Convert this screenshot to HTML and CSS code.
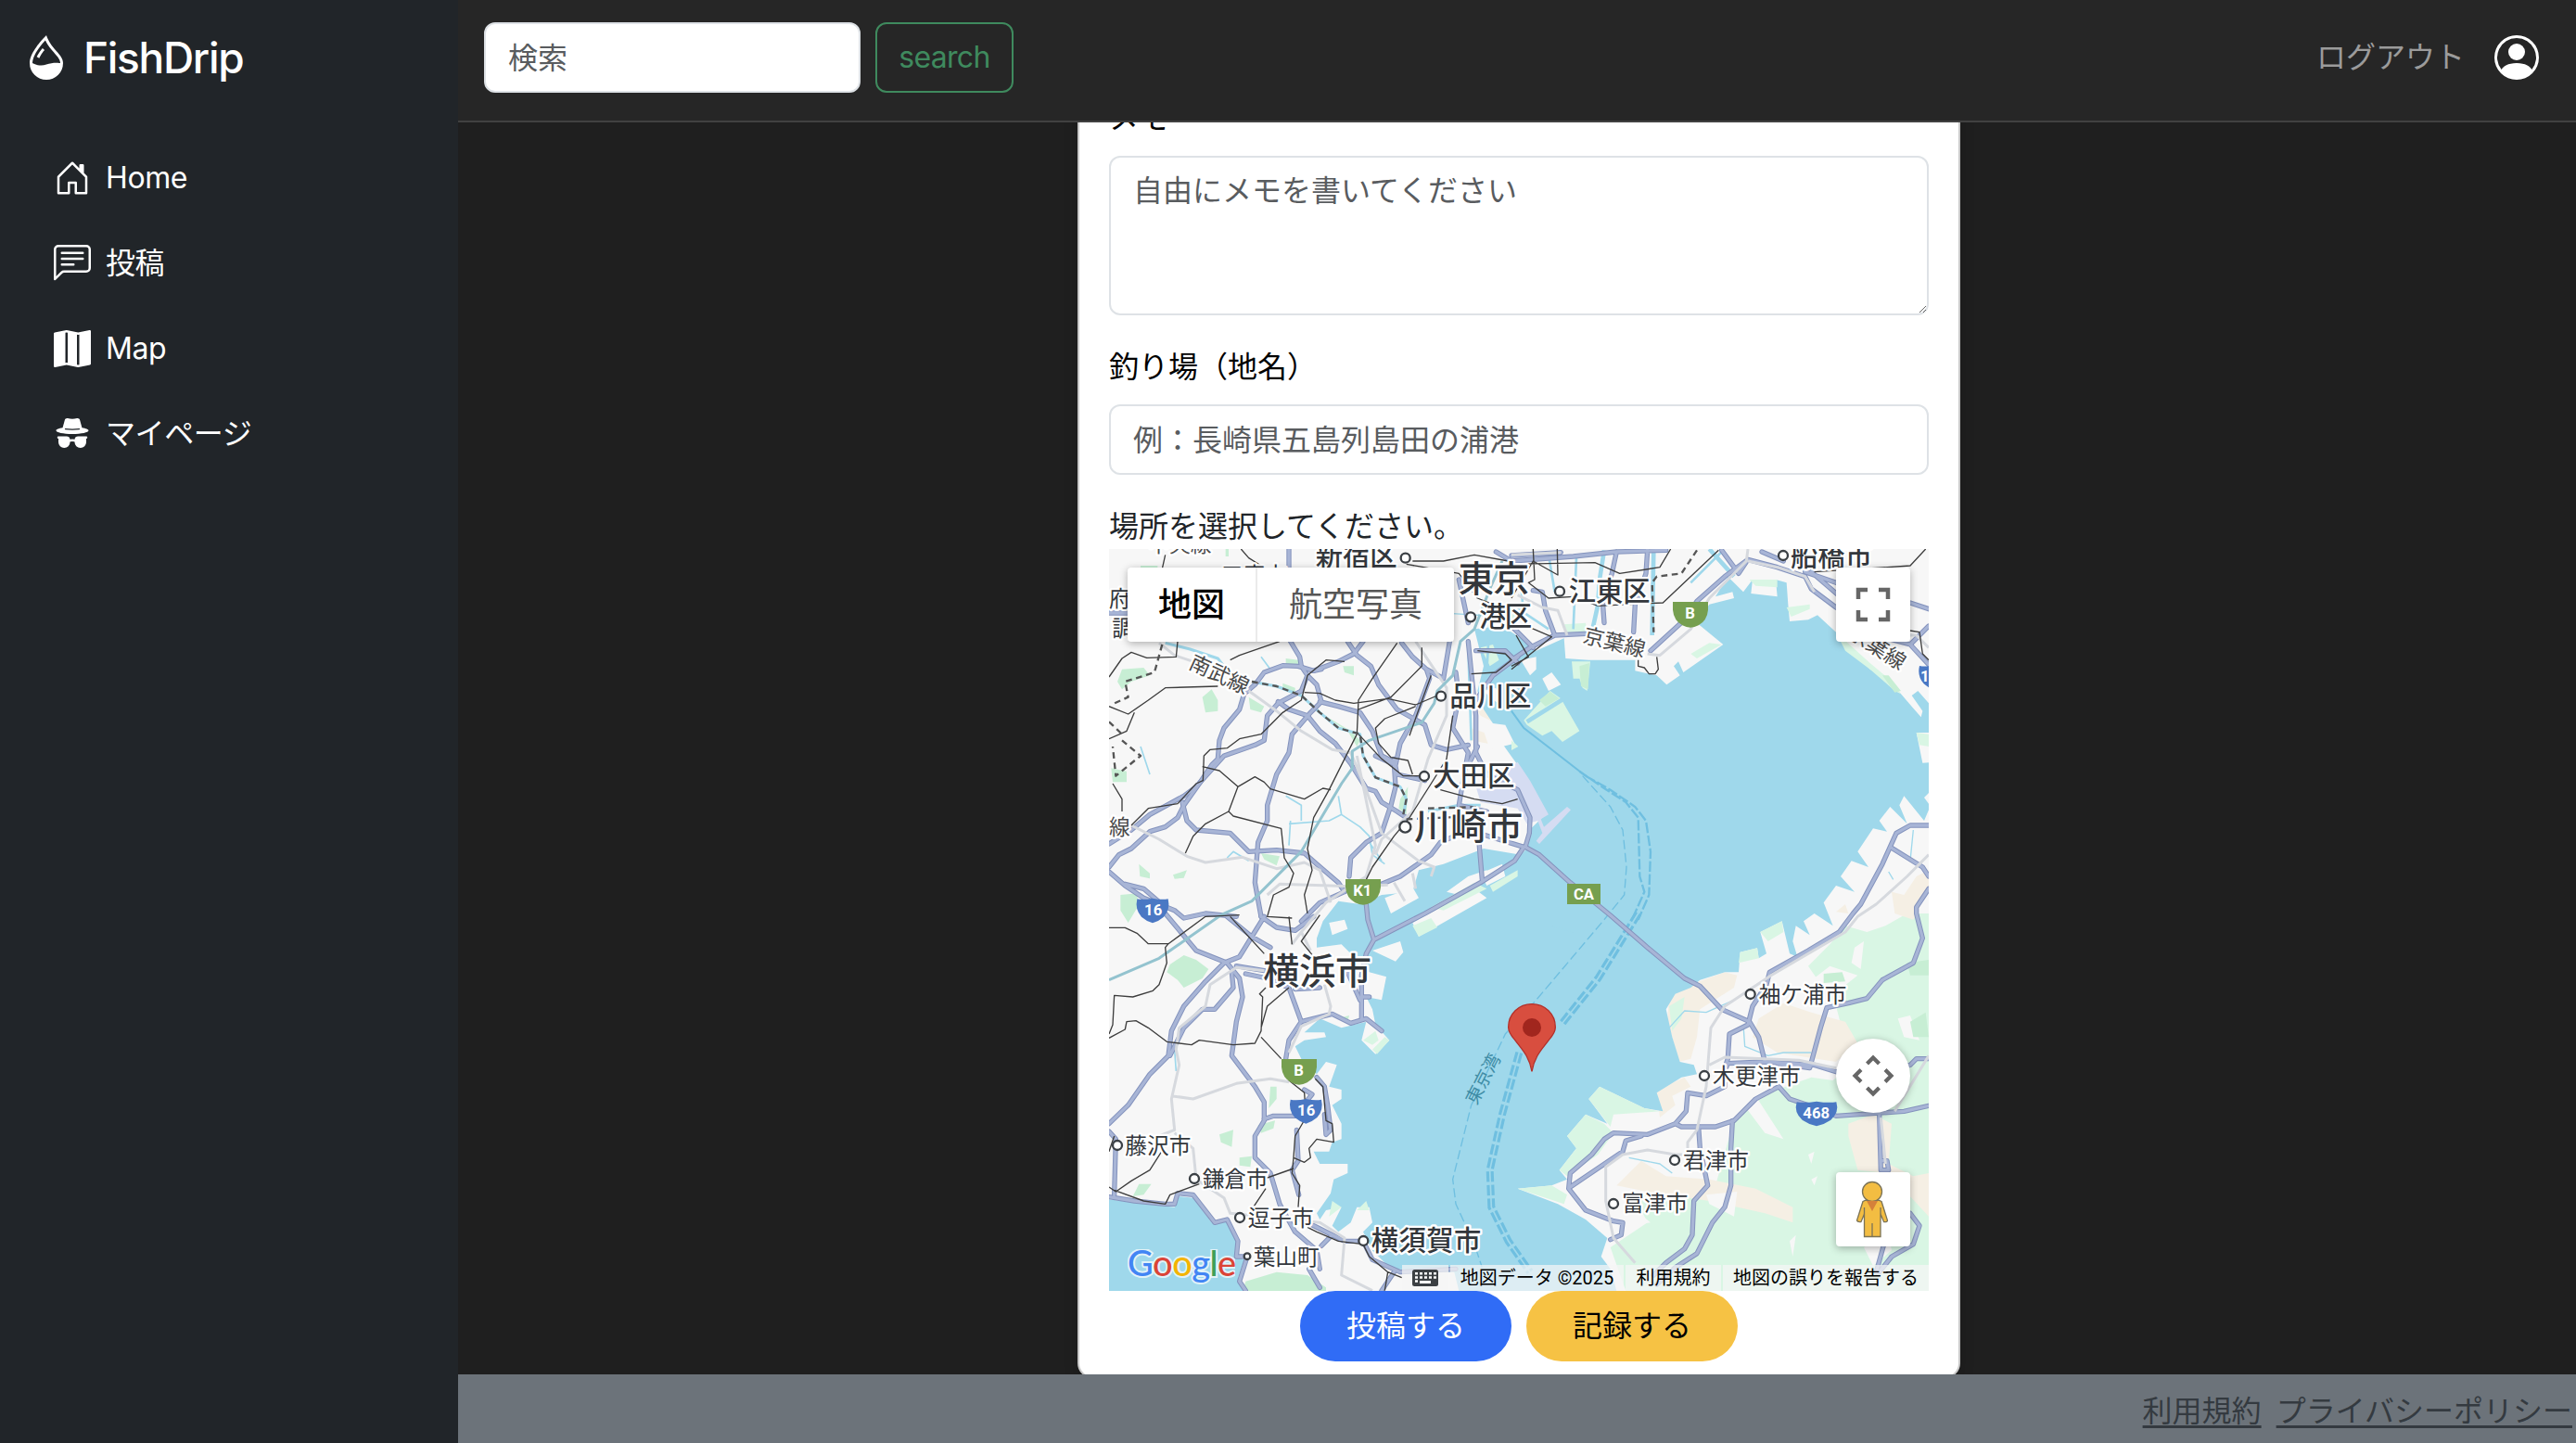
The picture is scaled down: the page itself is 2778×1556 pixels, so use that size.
FILE: index.html
```html
<!DOCTYPE html>
<html lang="ja">
<head>
<meta charset="utf-8">
<title>FishDrip</title>
<link rel="stylesheet" href="styles.css">
</head>
<body>
<div class="app">
  <aside class="sidebar">
    <a class="brand">
      <svg class="icon-lg" viewBox="0 0 16 16" fill="currentColor"><path fill-rule="evenodd" d="M7.21.8C7.69.295 8 0 8 0q.164.544.371 1.038c.812 1.946 2.073 3.35 3.197 4.6C12.878 7.096 14 8.345 14 10a6 6 0 0 1-12 0C2 6.668 5.58 2.517 7.21.8m.413 1.021A31 31 0 0 0 5.794 3.99c-.726.95-1.436 2.008-1.96 3.07C3.304 8.133 3 9.138 3 10c0 0 2.5 1.5 5 .5s5-.5 5-.5c0-1.201-.796-2.157-2.181-3.7l-.03-.032C9.75 5.11 8.5 3.72 7.623 1.82z"/><path fill-rule="evenodd" d="M4.553 7.776c.82-1.641 1.717-2.753 2.093-3.13l.708.708c-.29.29-1.128 1.311-1.907 2.87z"/></svg>
      <span>FishDrip</span>
    </a>
    <nav class="nav">
      <a class="nav-item"><svg class="icon" viewBox="0 0 16 16" fill="currentColor"><path d="M8.354 1.146a.5.5 0 0 0-.708 0l-6 6A.5.5 0 0 0 1.5 7.5v7a.5.5 0 0 0 .5.5h4.5a.5.5 0 0 0 .5-.5v-4h2v4a.5.5 0 0 0 .5.5H14a.5.5 0 0 0 .5-.5v-7a.5.5 0 0 0-.146-.354L13 5.793V2.5a.5.5 0 0 0-.5-.5h-1a.5.5 0 0 0-.5.5v1.293zM2.5 14V7.707l5.5-5.5 5.5 5.5V14H10v-4a.5.5 0 0 0-.5-.5h-3a.5.5 0 0 0-.5.5v4z"/></svg><span>Home</span></a>
      <a class="nav-item"><svg class="icon" viewBox="0 0 16 16" fill="currentColor"><path d="M14 1a1 1 0 0 1 1 1v8a1 1 0 0 1-1 1H4.414A2 2 0 0 0 3 11.586l-2 2V2a1 1 0 0 1 1-1zM2 0a2 2 0 0 0-2 2v12.793a.5.5 0 0 0 .854.353l2.853-2.853A1 1 0 0 1 4.414 12H14a2 2 0 0 0 2-2V2a2 2 0 0 0-2-2z"/><path d="M3 3.5a.5.5 0 0 1 .5-.5h9a.5.5 0 0 1 0 1h-9a.5.5 0 0 1-.5-.5M3 6a.5.5 0 0 1 .5-.5h9a.5.5 0 0 1 0 1h-9A.5.5 0 0 1 3 6m0 2.5a.5.5 0 0 1 .5-.5h5a.5.5 0 0 1 0 1h-5a.5.5 0 0 1-.5-.5"/></svg><span>投稿</span></a>
      <a class="nav-item"><svg class="icon" viewBox="0 0 16 16" fill="currentColor"><path fill-rule="evenodd" d="M16 .5a.5.5 0 0 0-.598-.49L10.5.99 5.598.01a.5.5 0 0 0-.196 0l-5 1A.5.5 0 0 0 0 1.5v14a.5.5 0 0 0 .598.49l4.902-.98 4.902.98a.5.5 0 0 0 .196 0l5-1A.5.5 0 0 0 16 14.5zM5 14.09V1.11l.5-.1.5.1v12.98l-.402-.08a.5.5 0 0 0-.196 0zm5 .8V1.91l.402.08a.5.5 0 0 0 .196 0L11 1.91v12.98l-.5.1z"/></svg><span>Map</span></a>
      <a class="nav-item"><svg class="icon" viewBox="0 0 16 16" fill="currentColor"><path fill-rule="evenodd" d="m4.736 1.968-.892 3.269-.014.058C2.113 5.568 1 6.006 1 6.5 1 7.328 4.134 8 8 8s7-.672 7-1.5c0-.494-1.113-.932-2.83-1.205l-.014-.058-.892-3.27c-.146-.533-.698-.849-1.239-.734C9.411 1.363 8.62 1.5 8 1.5s-1.411-.136-2.025-.267c-.541-.115-1.093.2-1.239.735m.015 3.867a.25.25 0 0 1 .274-.224c.9.092 1.91.143 2.975.143a30 30 0 0 0 2.975-.143.25.25 0 0 1 .05.498c-.918.093-1.944.145-3.025.145s-2.107-.052-3.025-.145a.25.25 0 0 1-.224-.274M2 10.5q.001-.264.085-.5H2a.5.5 0 0 1 0-1h3.5a1.5 1.5 0 0 1 1.488 1.312 3.5 3.5 0 0 1 2.024 0A1.5 1.5 0 0 1 10.5 9H14a.5.5 0 0 1 0 1h-.085q.084.236.085.5v1a2.5 2.5 0 0 1-5 0v-.14l-.21-.07a2.5 2.5 0 0 0-1.58 0l-.21.07v.14a2.5 2.5 0 0 1-5 0z"/></svg><span>マイページ</span></a>
    </nav>
  </aside>

  <div class="page">
    <header class="topbar">
      <form class="search">
        <input class="field search-field" type="text" placeholder="検索">
        <button class="search-btn" type="button">search</button>
      </form>
      <div class="account">
        <a class="logout">ログアウト</a>
        <svg class="icon-lg" viewBox="0 0 16 16" fill="currentColor"><path d="M11 6a3 3 0 1 1-6 0 3 3 0 0 1 6 0"/><path fill-rule="evenodd" d="M0 8a8 8 0 1 1 16 0A8 8 0 0 1 0 8m8-7a7 7 0 0 0-5.468 11.37C3.242 11.226 4.805 10 8 10s4.757 1.225 5.468 2.37A7 7 0 0 0 8 1"/></svg>
      </div>
    </header>

    <main class="content">
      <form class="card">
        <label class="label">メモ</label>
        <textarea class="field memo" placeholder="自由にメモを書いてください"></textarea>
        <label class="label">釣り場（地名）</label>
        <input class="field place" type="text" placeholder="例：長崎県五島列島田の浦港">
        <div class="map-title">場所を選択してください。</div>

        <div class="map">
          <svg class="map-canvas" viewBox="18 21 2652 2400">
            <defs>
              <path id="shield" d="M-50-34Q-30-30 0-36Q30-30 50-34Q58 0 36 24Q20 38 0 44Q-20 38-36 24Q-58 0-50-34z"/>
              <path id="expwy" d="M-57-42H57V-16Q54 18 26 34Q0 48-26 34Q-54 18-57-16z"/>
              <g id="road-lines">
                <path d="M18 1050L50 1010 90 990 150 935 200 920 240 890 260 850 310 780 350 720 370 700 375 640 390 600 440 540 455 490 490 460 520 420 580 398 630 400 680 415 760 385 810 360 840 320"/>
                <path d="M18 975L90 930 150 880 260 820 300 790 390 690 490 655 520 640 530 560 565 520 640 480 660 430 640 400 635 370 605 320M600 90V21M18 228H80"/>
                <path d="M510 1210L490 1100 500 970 530 900 530 850 560 750 600 680 610 620 670 550 705 515 690 460 660 430"/>
                <path d="M565 515L600 540 660 560 700 610 750 650 800 715 850 795 880 805 900 840 950 870 980 890"/>
                <path d="M700 515L760 530 830 550 870 610 900 690 940 710 945 790 930 850 900 940 850 970 800 1020 795 1080"/>
                <path d="M790 320L820 365 865 400 890 460 950 540 1040 590 1060 655 1110 670 1180 655"/>
                <path d="M965 325L1000 370 1045 410 1055 440 1010 560 960 650 945 720 880 690M940 700L950 750 1040 770M680 415L705 410M1045 410L1100 440 1120 320"/>
                <path d="M255 840L270 900 300 930 410 940 470 1000 560 995 650 1005 690 1040 760 1100 780 1130 700 1165 640 1225"/>
                <path d="M18 1065L70 1110 130 1150 230 1190 260 1215 330 1200 430 1210M70 1105L130 1120 200 1180"/>
                <path d="M900 1105L960 1080 1060 1010 1090 970 1180 930 1360 985M1215 970L1225 1090"/>
                <path d="M850 1170L855 1220 875 1285 850 1330 835 1400V1540M875 1285L1040 1200 1220 1100 1330 1030 1360 985"/>
                <path d="M1180 320L1190 420 1205 560 1205 680 1240 750 1340 800 1380 890 1378 940 1365 985M1140 420L1150 500 1130 600 1180 680 1165 760 1150 850 1240 870M1340 370L1260 430 1205 510M1205 350L1300 350 1340 390M1180 720L1210 660M1150 120L1180 260M1270 30L1320 60"/>
                <path d="M1365 985L1410 1010 1510 1100 1640 1206 1760 1310 1880 1410 1930 1435 2000 1510 2090 1550 2120 1600 2140 1680 2020 1685 2014 1700"/>
                <path d="M1320 60L1520 45 1660 30 1820 25M1320 42L1480 32M1660 30L1645 100 1615 190 1620 260M1760 25L1755 100 1720 200 1715 290"/>
                <path d="M1320 380L1380 340 1460 300 1560 295M1390 155L1420 160 1430 220 1460 300M1320 270L1390 340"/>
                <path d="M1770 350L1880 250 1920 190 2010 110 2085 55 2180 80 2270 110 2290 150 2370 210 2420 240 2500 300 2610 330 2670 395M2000 25L2055 100 2085 55M2270 95L2370 130 2610 195 2670 215M2610 330L2670 270M2130 30L2200 60M2290 95L2400 190"/>
                <path d="M2670 915L2610 915 2565 940 2520 1040 2450 1170 2425 1200 2380 1260 2280 1320 2155 1390 2145 1430 2100 1500 2085 1560 2025 1590 2020 1670 2010 1700M2545 985L2650 1050 2670 1080M2670 1120L2630 1180 2630 1200 2650 1280 2620 1360 2520 1415 2470 1475 2410 1490 2340 1505 2320 1570 2285 1700 2180 1685M2140 1680L2300 1690 2380 1715 2520 1720 2610 1690 2630 1670 2670 1670"/>
                <path d="M2010 1700V1760L1950 1790 1890 1780 1885 1840 1850 1880 1760 1915 1650 1910 1620 1930 1580 1980 1510 2040 1505 2090 1560 2160 1650 2195 1680 2200 1675 2240 1640 2255M1850 1880L1870 1890 1980 1890 2040 1870 2110 1800 2185 1760 2220 1800 2280 1820 2370 1855 2590 1840 2670 1822"/>
                <path d="M1925 1890L1930 1960 1955 2080 1910 2130 1905 2240 1880 2285 1820 2330 1780 2370M2035 1870L2030 1960V2080L2010 2150 1970 2200 1920 2300 1850 2345 1790 2400M1510 2085L1680 1970 1690 1935 1740 1920M2510 1850L2515 2030 2540 2030 2535 2000 2515 2000M2610 2170L2640 2210 2620 2270 2550 2310 2510 2360M2525 2270L2500 2360"/>
                <path d="M200 1200L300 1320 400 1360 440 1410 450 1470 430 1550 415 1660 490 1760 520 1810 520 1870 490 1920 490 1990 540 2040 570 2140 620 2230 690 2290 700 2350M665 2350L700 2410"/>
                <path d="M520 1210L480 1275 440 1340 390 1360 330 1420 260 1500 220 1580 210 1660 150 1720 80 1820 18 1880M400 1210L480 1275 540 1310M510 1210L560 1245 620 1255 680 1210M415 1390L420 1440 360 1510 320 1510 260 1570 215 1660"/>
                <path d="M460 1395L530 1410 600 1440 640 1550 600 1610 590 1670M430 1370L520 1385M640 1550L740 1525 800 1555 850 1540 900 1580M835 1470H860M790 1390L830 1480M620 1445L700 1440"/>
                <path d="M520 1865L550 1855H650M625 1900L630 2000 610 2030 632 2110M690 1730L715 1760 725 1820 735 1900 720 1915 715 1850M650 1770L675 1785 655 1810"/>
                <path d="M18 2117L100 2130 200 2140 230 2140 240 2105 290 2110 360 2200 400 2190 435 2260 430 2310 465 2310 440 2390 460 2420M18 1905L40 1930 35 2110M670 2205L780 2260 840 2260 870 2320 960 2360 1140 2350M780 2260L740 2240 705 2275M940 2360L900 2420"/>
              </g>
            </defs>

            <rect x="18" y="21" width="2652" height="2400" fill="#f7f7f7"/>

            <!-- parks and hills -->
            <g fill="#c7eed4">
              <path d="M60 410L130 405 150 430 90 450 60 475 45 450zM320 500L350 475 370 510 370 545 330 550zM470 500L520 530 510 550 475 540zM590 375L630 380 640 400 590 395zM775 400L810 400 810 430 780 420zM580 455L620 470 620 485 580 475zM25 730L75 740 75 775 30 775zM510 1005L570 1015 560 1045 520 1025zM115 1040L150 1070 150 1087 118 1080zM225 1075L270 1060 260 1085 230 1088zM55 1140L110 1135 110 1180 80 1230 55 1190zM395 21H405V45H395zM120 75H175V85H120z"/>
              <path d="M215 1365L260 1335 300 1350 340 1380 320 1410 260 1440 240 1415 205 1390zM540 1760H560V1800L535 1830zM500 1885L555 1870 550 1895 510 1910zM375 1915L420 1900 415 1955 380 1940zM440 1990L480 1985 475 2020 440 2015zM115 2075L155 2075 130 2110 95 2115zM775 1535L795 1530 790 1550zM700 550L800 610 830 640 820 660 790 610 710 560zM960 830L985 790 980 880 955 860z"/>
            </g>

            <!-- Chiba side vegetation -->
            <path fill="#d9f6e4" d="M2350 1300L2400 1240 2470 1260 2530 1240 2600 1200H2670V1850L2670 2421H1690L1640 2280 1760 2200 1720 2120 1860 2080 1980 2080 2040 1870 2090 1820 2180 1770 2290 1730 2360 1740 2420 1690 2370 1500 2280 1370z"/>
            <g fill="#f5efe4">
              <path d="M1830 1470L1900 1430 2010 1390 2050 1400 2040 1440 1930 1510 1920 1600 1900 1670 1860 1680 1840 1600 1825 1540zM2120 1540L2200 1490 2290 1520 2400 1550 2440 1620 2370 1680 2180 1650 2100 1600zM1790 1770L1880 1730 1900 1760 1840 1790 1850 1820 1800 1860zM1660 2080L1740 2000 1820 2050 1960 2060 2110 2090 2230 2150 2230 2200 2140 2170 1960 2130 1760 2100zM2410 1880L2490 1850 2550 1880 2540 2010 2620 2050 2670 2040V2180L2540 2040 2440 2030 2410 1920zM2550 1130L2590 1140 2630 1080 2670 1060V1120L2620 1220 2560 1200zM2370 1195L2400 1170 2410 1200zM1200 530L1260 550 1260 580 1220 560zM1190 600L1190 640 1290 660 1300 640z"/>
            </g>
            <g fill="#f7f7f7">
              <path d="M2050 1790L2110 1790 2200 1930 2140 1910zM2260 1440L2350 1370 2440 1400 2340 1480zM2570 1540L2610 1530 2640 1610 2590 1600zM2430 1310L2460 1290 2450 1380 2420 1360zM2280 1980L2300 1970 2290 2010zM2290 2060L2310 2050 2300 2080zM2220 2260L2240 2240 2230 2310zM1710 2150L1770 2200 1700 2210zM1950 2110L2050 2100 2040 2180 1960 2140zM2460 2280L2540 2240 2550 2290 2490 2340z"/>
            </g>
            <path fill="#c7eed4" d="M2330 1395L2390 1390 2400 1420 2330 1425zM2600 1360L2670 1350V1400L2610 1400zM2610 1550L2660 1520 2670 1600 2620 1600zM460 2390L560 2360 660 2370 720 2410V2421H450z"/>

            <!-- Tokyo Bay -->
            <path fill="#9fd8eb" d="M1200 280L1290 270 1350 310 1400 350 1490 310 1495 375 1570 380 1720 380 1720 415 1790 430 1822 460 1865 430 1845 400 1860 385 1876 420 2005 330 1920 260 1960 200 2040 180 2035 160 1980 175 2020 110 2070 160 2100 120 2095 165 2180 175 2175 120 2210 130 2215 200 2220 255 2280 250 2310 235 2370 290 2420 340 2480 410 2520 430 2580 490 2645 565 2650 545 2615 495 2635 480 2670 520V615L2630 615 2650 713 2670 712V810L2655 825 2670 845V865L2655 900 2590 820 2575 850 2600 910 2545 855 2510 900 2535 935 2490 925 2440 1000 2475 1050 2420 1030 2385 1080 2430 1130 2370 1110 2330 1165 2360 1240 2300 1200 2265 1225 2285 1270 2240 1240 2230 1290 2245 1340 2220 1330 2195 1225 2125 1260 2145 1330 2120 1345 2115 1312 2060 1325 2055 1390 2010 1390 1930 1415 1900 1440 1850 1460 1820 1510 1840 1600 1865 1680 1910 1690 1920 1720 1870 1730 1790 1780 1810 1840 1750 1830 1605 1760 1570 1800 1630 1880 1560 1850 1500 1920 1530 1960 1475 2030 1500 2060 1450 2080 1340 2090 1470 2140 1560 2190 1630 2250 1610 2310 1640 2350 1660 2421H1150L1135 2360 930 2350 870 2290 840 2230 870 2200 860 2150 820 2150 800 2200 760 2230 740 2210 770 2150 720 2160 700 2190 690 2170 735 2105 745 2060 790 2040V2010L700 2010 680 1970 730 1970 740 1940 770 1930V1880L740 1820 770 1800V1770L730 1760 755 1690 720 1680 690 1720 640 1670 620 1630 650 1610 720 1600 715 1585 650 1585 700 1540 770 1570 850 1550 835 1610 880 1655 925 1610 880 1560 870 1510 850 1470 900 1480 915 1405 860 1390 820 1350 770 1300 690 1310V1280L710 1225 760 1160 830 1170 900 1140 1000 1130 1020 1060 1100 1040 1230 990 1350 1010 1370 990 1378 930 1430 880 1340 720 1290 650 1270 600 1230 540 1210 480 1230 400z"/>
            <!-- Sagami Bay -->
            <path fill="#9fd8eb" d="M18 2125L100 2135 230 2150 245 2115 290 2120 350 2200 400 2195 430 2260 425 2310 455 2320 435 2380 455 2421H18z"/>

            <!-- reclaimed islands -->
            <g fill="#f7f7f7">
              <path d="M1000 1230L1200 1120 1240 1150 1020 1275zM910 1150L1000 1115 1020 1150 930 1200zM1110 1130L1180 1080 1240 1060 1250 1090 1150 1140zM1220 1070L1290 1040 1300 1080 1240 1110zM870 1320L960 1290 970 1325 945 1355zM730 1230L780 1220 790 1250 740 1270zM1420 440L1450 420 1480 460 1440 480zM1350 380L1400 370 1400 410 1380 430zM1230 480L1270 470 1290 530 1250 500zM1220 580L1300 590 1330 650 1250 670zM790 1500L840 1480 860 1510 800 1530z"/>
            </g>
            <g fill="#d9f6e4">
              <path d="M1360 575L1445 480 1480 505 1540 610 1485 645 1450 610 1420 625 1370 590zM1515 385H1575L1565 480 1550 470 1540 440 1520 440zM1060 1180L1200 1100 1240 1120 1100 1190zM1250 1110L1340 1060 1340 1080 1260 1130zM1000 1240L1060 1215 1080 1245 1020 1275zM1320 640L1342 660 1320 672zM1900 360L1960 325 2000 330 1920 375zM2090 120L2180 120 2180 145 2110 140zM2210 210L2285 200 2285 215 2225 240zM2370 290L2480 390 2540 440 2580 490 2560 480 2480 410 2400 350zM2630 615L2670 620V660L2640 655zM1490 265L1560 260 1565 290 1500 290zM840 1610L880 1580 890 1610 870 1625zM870 1640L910 1600 925 1610 885 1655zM740 2130L770 2150 730 2180zM850 2130L860 2160 820 2160zM1500 1920L1560 1850 1620 1880 1650 1910 1600 1980 1500 2050 1475 2030 1530 1960zM1605 1760L1570 1800 1640 1890 1650 1850 1800 1840 1750 1830zM1340 2090L1450 2080 1500 2110 1490 2140zM1830 1500L1880 1470 1870 1540 1840 1580zM2060 1325L2115 1312 2120 1345 2055 1360zM2125 1260L2195 1225 2200 1260 2150 1290z"/>
              <path d="M1270 210L1340 200 1350 250 1300 260zM1220 340L1260 330 1280 380 1250 400z"/>
            </g>
            <path stroke="#9fd8eb" stroke-width="14" fill="none" d="M1370 580L1490 505"/>
            <path fill="#c7eed4" d="M1410 510L1445 482 1475 505 1430 530zM1540 400L1572 390 1568 475 1545 465zM2520 430L2540 430 2580 480 2560 485z"/>
            <path fill="#d5dcf2" d="M1205 790L1340 710 1380 770 1440 880 1415 895 1425 920 1500 855 1512 865 1410 975 1400 965 1420 940 1405 900 1370 910 1340 860 1220 840z"/>

            <!-- rivers -->
            <g fill="none" stroke="#9fd8eb" stroke-linejoin="round">
              <path stroke-width="9" d="M200 325L280 345 370 375 390 400M480 450L560 465 640 495 700 550 760 600 830 620 840 690 880 760 960 790 980 830 970 880M1050 870L1150 850 1220 850"/>
              <path stroke-width="5" d="M600 910L730 900 770 880 830 920 860 950 870 1010 910 1040M770 880L760 820M400 1020L420 1000 470 1030M510 370L540 410M605 900L600 980M120 660L150 750M640 900L640 850 590 820M860 970L900 1030M230 1640L235 1710"/>
              <path stroke-width="14" d="M1620 25L1605 120 1600 200 1580 290M1780 21L1775 300M1960 21L2040 110"/>
              <path stroke-width="8" d="M1180 340L1190 640M1250 240L1240 420M1320 200L1440 280M1350 130L1360 240M1440 40L1460 160M1530 50L1520 280M1900 130L2000 30"/>
              <path stroke-width="4" d="M1830 1570L1880 1515 1950 1520 2040 1480M2070 1560L2075 1630 2150 1660 2200 1650 2290 1650M1700 1990L1800 2010 1840 2040M2620 930L2610 1030M2540 1065L2555 1090M1130 230L1290 240M1450 1240L1520 1260"/>
            </g>

            <!-- ferry lanes -->
            <g fill="none" stroke="#6fbfe0">
              <path stroke-width="6" d="M1320 545L1360 600 1450 670 1560 755"/>
              <path stroke-width="7" stroke-dasharray="34 8" d="M1540 740L1620 795 1690 840 1730 890 1735 1080 1750 1130 1710 1220M1560 755L1640 800 1720 855 1755 900 1770 1000 1765 1140 1730 1220"/>
              <path stroke-width="4" stroke-dasharray="30 12" d="M1550 755L1640 855 1680 930 1692 1050 1685 1140 1620 1220 1400 1480 1300 1590 1190 1820 1130 2060 1140 2140 1200 2270 1225 2345"/>
              <path stroke-width="24" stroke-dasharray="34 10" d="M1730 1200L1600 1410 1480 1560M1345 1650L1290 1850 1250 2030 1255 2150 1310 2260 1380 2360"/>
            </g>
            <path fill="none" stroke="#9fd8eb" stroke-width="5" d="M1730 1200L1600 1410 1480 1560M1345 1650L1290 1850 1250 2030 1255 2150 1310 2260 1380 2360"/>

            <!-- roads -->
            <use href="#road-lines" class="road-edge"/>
            <use href="#road-lines" class="road-fill"/>

            <!-- JR lines -->
            <g class="rail-light">
              <path d="M90 915L180 960 270 1015 330 1035 450 1018 560 1055 650 1035 700 1060 735 1165M180 325L230 365 290 385M470 480L560 545 640 610 740 670 800 680 850 800 900 940 1020 1030 1070 1050 1060 1080M820 690L880 980 850 1080 720 1165 640 1260 670 1320M1010 320L1110 470 1110 560 1050 700 1000 870 900 960 880 1010M530 1140L570 1105 800 1112 920 1108M640 1260L610 1300M940 1100L975 1160M1000 1070L1010 1120"/>
              <path d="M520 1385L430 1375 345 1430 330 1500 245 1570 235 1640 245 1690 220 1800 230 1900 180 1920M220 1790L290 1800 430 1750 540 1735 600 1745M715 1430L735 1500 730 1525 640 1565 600 1650M230 1910L290 1960 300 2060 390 2120 410 2170 700 2200 780 2250 770 2370 870 2420"/>
              <path d="M1340 170L1420 210 1470 220 1500 300M1760 360L1800 365 1900 280 1960 180 2080 60 2085 21M2085 60L2180 80 2270 110 2300 160M1320 40L1480 32M2590 300H2630L2670 340M2670 1010L2600 1080 2500 1170 2440 1210 2400 1260 2160 1400 2010 1500 1965 1570 1950 1760 1920 1900 1890 1940 1890 1980 1850 1980 1760 1965 1680 1980 1625 2020 1625 2130 1650 2250 1720 2330M1960 1690L2010 1665 2250 1675 2370 1700M2515 1860L2530 2010M2670 1660L2560 1840"/>
            </g>

            <!-- Shinkansen -->
            <path fill="none" stroke="#93c3cf" stroke-width="9" stroke-linejoin="round" d="M18 1415L180 1345 380 1205 480 1160 640 1000 770 780 805 730V675L860 640 1030 582 1070 520 1080 480 1130 430 1155 320 1200 280 1250 150 1290 60"/>

            <!-- private railways -->
            <g class="rail-dark">
              <path d="M18 435L60 375 90 355 140 373 235 370 240 320M18 530L80 555 145 510 200 470 370 465M18 635L75 610 100 550M410 380L440 365 570 320M90 915L145 860 240 845 300 780 322 770 325 690 345 670 400 665 440 635 510 620 580 550 640 510 660 430 720 380 780 385M320 725L375 738 435 790 490 758 520 775 540 797 650 830 710 795 735 800M435 790L405 870 420 885 575 925 585 1020 615 1070 600 1115 550 1140 530 1210 610 1215M405 870L330 910 290 950 265 1005"/>
              <path d="M650 485L700 488 750 510 810 520 920 505 1010 525 1080 495M950 325L870 440 825 510 820 620 760 740 730 800 680 890 660 990 675 1060 650 1140 660 1200M825 620L900 700 970 755 1020 755M825 540L930 500 1030 400V340M1010 530L910 570 880 600 890 650 930 695 985 705 1000 750M1060 430L1020 540 990 625M1130 560L1110 700 1060 780 990 890 940 950 870 1050 850 1090M1090 800L1200 830 1290 845 1340 830M1210 350L1300 360 1320 380 1270 420 1190 425M445 21L470 50 510 75M190 85L200 40M30 780L60 830 60 870M980 70L1150 100 1210 180 1260 200M1000 60L1100 60 1200 40 1310 60"/>
              <path d="M18 1246H70L110 1265 145 1298H210L200 1310 205 1360 180 1430 160 1450 95 1470 35 1465 30 1560 18 1590M18 1603L70 1575 75 1550 105 1547 145 1570 205 1615 285 1625 310 1610 420 1625 490 1620 510 1580 515 1470 505 1460 525 1440M210 1298L330 1210 440 1205M510 1600L575 1670M510 1570L530 1500 600 1440M600 1740L650 1780 655 1860 620 1920 615 1990 650 2005 670 1990 665 1960 690 1930 745 1940 740 1880 720 1870 710 1760 685 1735M615 1990L610 2040 635 2080 630 2150M615 2025L530 2055M525 2090L485 2150M18 2085L40 2100 90 2065 150 2030 220 1920M18 1970L35 1920M35 2095L130 2130 200 2140 215 2110 310 2075M660 2215L690 2230 760 2260 840 2270 860 2310 920 2360 910 2420M920 2360L965 2378M410 1210L520 1330M600 1210L610 1300M700 1205L640 1290 680 1340"/>
              <path d="M1320 180L1390 60 1470 105 1468 21M1320 70L1590 65 1670 100 1800 80 1835 21M1390 21L1395 120 1375 130 1440 180 1520 175 1600 205 1700 200 1810 195 1990 25M1380 275L1450 305 1320 410M1730 380V400L1750 405 1765 425 1785 425 1795 410 1790 370M2300 95L2610 75 2660 21M2610 285L2640 290 2650 360 2670 380M1335 300L1375 370 1320 400"/>
              <path stroke-dasharray="20 14" stroke-width="7" stroke="#555" d="M1920 25L1870 100 1790 110 1775 130 1780 290M190 330L165 420 70 450 80 500 25 525M18 580L60 620M60 640L120 690 40 755 30 660M480 450L560 465 640 495 700 550 760 600 830 620 840 690 880 760 960 790 980 830 970 880M1050 860L1220 855M980 895L1220 885"/>
            </g>

            <!-- place markers -->
            <g fill="#fff" stroke="#3b4045" stroke-width="7">
              <circle cx="977" cy="50" r="15"/><circle cx="1188" cy="241" r="15"/><circle cx="1092" cy="497" r="15"/><circle cx="1038" cy="756" r="15"/><circle cx="976" cy="920" r="18"/><circle cx="1476" cy="158" r="15"/><circle cx="2199" cy="42" r="15"/><circle cx="45" cy="1950" r="15"/><circle cx="294" cy="2058" r="15"/><circle cx="441" cy="2184" r="15"/><circle cx="465" cy="2309" r="10"/><circle cx="841" cy="2259" r="15"/><circle cx="2093" cy="1461" r="15"/><circle cx="1944" cy="1725" r="15"/><circle cx="1848" cy="1998" r="15"/><circle cx="1650" cy="2139" r="15"/>
            </g>

            <!-- place names -->
            <g class="place-xl">
              <text x="1148" y="160" textLength="230">東京</text>
              <text x="1005" y="960" textLength="352">川崎市</text>
              <text x="517" y="1428" textLength="350">横浜市</text>
            </g>
            <g class="place-lg">
              <text x="686" y="76">新宿区</text><text x="1216" y="270" textLength="170">港区</text><text x="1120" y="528">品川区</text><text x="1066" y="786">大田区</text><text x="1505" y="190">江東区</text><text x="2223" y="75">船橋市</text><text x="866" y="2290" textLength="356">横須賀市</text>
            </g>
            <g class="place-md">
              <text x="70" y="1976">藤沢市</text><text x="320" y="2084">鎌倉市</text><text x="467" y="2210">逗子市</text><text x="485" y="2336">葉山町</text><text x="2120" y="1487">袖ケ浦市</text><text x="1971" y="1751">木更津市</text><text x="1875" y="2024">君津市</text><text x="1678" y="2164">富津市</text><text x="380" y="132">三鷹市</text><text x="18" y="206">府中</text><text x="28" y="304">調布</text>
            </g>
            <g class="place-rail">
              <text x="145" y="30">中央線</text><text x="18" y="944">線</text><text transform="translate(272 405) rotate(25)">南武線</text><text transform="translate(1548 322) rotate(14)">京葉線</text><text transform="translate(2405 303) rotate(33)">京葉線</text>
            </g>
            <text class="place-sea" transform="translate(1207 1822) rotate(-63)">東京湾</text>

            <!-- route badges -->
            <g class="badge-text">
              <use href="#shield" x="159" y="1187" fill="#4a78c4"/><text x="161" y="1206">16</text>
              <use href="#shield" x="655" y="1836" fill="#4a78c4"/><text x="656" y="1854">16</text>
              <use href="#shield" transform="translate(2307 1844) scale(1.28 1)" fill="#4a78c4"/><text x="2306" y="1862">468</text>
              <use href="#shield" x="2690" y="433" fill="#4a78c4"/><text x="2672" y="450">16</text>
              <use href="#expwy" x="840" y="1131" fill="#769f4f"/><text x="838" y="1142">K1</text>
              <use href="#expwy" x="1899" y="234" fill="#769f4f"/><text x="1898" y="246">B</text>
              <use href="#expwy" x="633" y="1713" fill="#769f4f"/><text x="632" y="1725">B</text>
              <rect x="1500" y="1104" width="108" height="66" fill="#769f4f"/><text x="1554" y="1155">CA</text>
            </g>

            <!-- selected location pin -->
            <path fill="#d84e3f" stroke="#b3302a" stroke-width="4" d="M1386 1711C1377 1660 1352 1638 1331 1609Q1310 1585 1310 1568C1310 1525 1344 1493 1386 1493S1462 1525 1462 1568Q1462 1585 1441 1609C1420 1638 1395 1660 1386 1711z"/>
            <circle cx="1386" cy="1569" r="30" fill="#a1261e"/>
          </svg>

          <div class="map-type">
            <span class="map-type-on">地図</span>
            <span class="map-type-off">航空写真</span>
          </div>
          <div class="ctrl ctrl-full"><svg viewBox="0 0 80 80" fill="none" stroke="#666" stroke-width="4"><path d="M24 34V24H34M46 24H56V34M56 46V56H46M34 56H24V46"/></svg></div>
          <div class="ctrl ctrl-pan"><svg viewBox="0 0 80 80" fill="none" stroke="#666" stroke-width="4.2"><path d="M33.5 27L40 20.5 46.500 27M33.500 53L40 59.500 46.500 53M27 33.500L20.500 40 27 46.500M53 33.500L59.500 40 53 46.500"/></svg></div>
          <div class="ctrl ctrl-pegman">
            <svg viewBox="0 0 80 80" fill="#f3bd42" stroke="#7b7357" stroke-width="1.300">
              <path d="M29 31.500Q31 30 35 30H43Q47 30 49 31.500L55.500 52Q55.500 54 51.500 53.500L48 45V69.500H30.500V45L27 53.500Q23 54 22.500 52z"/>
              <path fill="none" d="M39 55V69M30.500 45V38M48 45V38"/>
              <circle cx="39" cy="21" r="10.500"/>
              <path fill="#d5813a" stroke="none" d="M33 31H45L39 42z"/>
            </svg>
          </div>
          <svg class="google" viewBox="0 0 116 40">
            <text x="0" y="29"><tspan fill="#4285f4">G</tspan><tspan fill="#db4437">o</tspan><tspan fill="#f4b400">o</tspan><tspan fill="#4285f4">g</tspan><tspan fill="#3f9f55">l</tspan><tspan fill="#db4437">e</tspan></text>
          </svg>
          <div class="credits">
            <span class="credit credit-key"><svg viewBox="0 0 28 18"><rect width="28" height="18" rx="2.500" fill="#3c4043"/><path stroke="#fff" stroke-width="2.600" stroke-dasharray="3 2" d="M3 4.200H26M3 8.500H26M3 12.500H6"/><path fill="#fff" d="M8 12H20V15H8z"/></svg></span>
            <span class="credit credit-data">地図データ ©2025</span>
            <span class="credit credit-terms">利用規約</span>
            <span class="credit credit-report">地図の誤りを報告する</span>
          </div>
        </div>

        <div class="actions">
          <button class="pill pill-post" type="button">投稿する</button>
          <button class="pill pill-log" type="button">記録する</button>
        </div>
      </form>
    </main>

    <footer class="footer"><a>利用規約</a><a>プライバシーポリシー</a></footer>
  </div>
</div>
</body>
</html>
```
FILE: styles.css
```css
* { box-sizing: border-box; }

body {
  margin: 0;
  font: 32px/48px Inter, "Noto Sans CJK JP", sans-serif;
  background: #1f1f1f;
  color: #212529;
}

button, input, textarea { font: inherit; margin: 0; }

.app { display: flex; height: 1556px; overflow: hidden; }

.sidebar { width: 494px; flex: none; background: #212529; color: #fff; }

.brand {
  display: flex;
  align-items: center;
  gap: 16px;
  height: 124px;
  padding-left: 26px;
  font-size: 46px;
  font-weight: 500;
  letter-spacing: -1.3px;
}

.icon-lg { width: 48px; height: 48px; display: block; }
.icon { width: 40px; height: 40px; }

.nav { padding-top: 22px; }
.nav-item {
  display: flex;
  align-items: center;
  gap: 16px;
  height: 92px;
  padding-left: 58px;
}
.nav-item span { letter-spacing: -0.4px; }

.page { flex: 1; display: flex; flex-direction: column; min-width: 0; }

.topbar {
  flex: none;
  display: flex;
  justify-content: space-between;
  align-items: flex-start;
  height: 132px;
  padding: 24px 40px 0 28px;
  background: #262626;
  border-bottom: 2px solid #414141;
}

.search { display: flex; gap: 16px; }

.field {
  display: block;
  width: 100%;
  height: 76px;
  padding: 12px 24px;
  border: 2px solid #dee2e6;
  border-radius: 12px;
  background: #fff;
  outline: none;
}
.field::placeholder { color: #595c5f; opacity: 1; }
.search-field { width: 406px; }

.search-btn {
  width: 149px;
  height: 76px;
  padding: 0;
  border: 2px solid #3f8a5e;
  border-radius: 12px;
  background: transparent;
  color: #3f8a5e;
  letter-spacing: -0.7px;
}

.account { display: flex; align-items: center; gap: 32px; height: 76px; color: #fff; }
.logout { color: #9b9b9b; }

.content { flex: 1; min-height: 0; overflow: hidden; padding-left: 668px; }

.card {
  width: 952px;
  height: 1410px;
  margin-top: -56px;
  padding: 26px 32px 16px;
  border: 2px solid #c8c8c8;
  border-radius: 16px;
  background: #fff;
  box-shadow: 0 8px 16px rgba(0, 0, 0, .15);
}

.label { display: block; margin-bottom: 16px; color: #000; }
.memo { height: 172px; margin-bottom: 32px; resize: vertical; }
.place { margin-bottom: 32px; }

.map { position: relative; width: 884px; height: 800px; overflow: hidden; }
.map-canvas { display: block; width: 884px; height: 800px; }

.road-edge, .road-fill { fill: none; stroke-linejoin: round; stroke-linecap: round; }
.road-edge { stroke: #8493bd; stroke-width: 16; }
.road-fill { stroke: #a8b5d6; stroke-width: 10; }
.rail-light { fill: none; stroke: #d6d9de; stroke-width: 9; stroke-linejoin: round; }
.rail-dark { fill: none; stroke: #3d3d3d; stroke-width: 4; stroke-linejoin: round; }

.map-canvas text { font-family: "Noto Sans CJK JP", sans-serif; fill: #33373c; paint-order: stroke; stroke: #fff; stroke-width: 14px; stroke-linejoin: round; }
.place-xl text { font-size: 117px; font-weight: 500; }
.place-lg text { font-size: 88px; font-weight: 500; }
.place-md text { font-size: 71px; }
.place-rail text { font-size: 68px; fill: #4a4a4a; }
.map-canvas .place-sea { font-size: 58px; fill: #3f8da6; stroke: none; }
.map-canvas .badge-text text { font-family: Roboto, sans-serif; font-size: 50px; font-weight: 700; fill: #fff; stroke: none; text-anchor: middle; }

.map-type {
  position: absolute;
  left: 20px;
  top: 20px;
  display: flex;
  height: 80px;
  font-size: 36px;
  line-height: 80px;
  text-align: center;
  border-radius: 4px;
  background: #fff;
  box-shadow: 0 2px 8px rgba(0, 0, 0, .3);
}
.map-type-on { width: 140px; color: #000; font-weight: 500; border-right: 2px solid #ebebeb; }
.map-type-off { width: 212px; color: #565656; }

.ctrl {
  position: absolute;
  right: 20px;
  width: 80px;
  height: 80px;
  border-radius: 4px;
  background: #fff;
  box-shadow: 0 2px 8px rgba(0, 0, 0, .3);
}
.ctrl svg { display: block; }
.ctrl-full { top: 20px; }
.ctrl-full svg { stroke-width: 4.5; }
.ctrl-pan { top: 528px; border-radius: 50%; }
.ctrl-pegman { top: 672px; }

.google { position: absolute; left: 20px; top: 755px; width: 116px; height: 40px; }
.google text { font: 500 38px Lato, sans-serif; letter-spacing: -0.5px; paint-order: stroke; stroke: rgba(255, 255, 255, .7); stroke-width: 4px; }

.credits {
  position: absolute;
  right: 0;
  bottom: 0;
  display: flex;
  gap: 2px;
  height: 28px;
  font: 20px/28px Roboto, "Noto Sans CJK JP", sans-serif;
  color: #000;
}
.credit { background: rgba(245, 245, 245, .72); text-align: center; white-space: nowrap; }
.credit-key { width: 50px; display: flex; justify-content: center; align-items: center; }
.credit-key svg { width: 28px; height: 18px; }
.credit-data { width: 187px; }
.credit-terms { width: 103px; }
.credit-report { width: 222px; }

.actions { display: flex; justify-content: center; gap: 16px; }
.pill { width: 228px; height: 76px; padding: 0; border: 0; border-radius: 38px; }
.pill-post { background: #306cf6; color: #fff; }
.pill-log { background: #f6c244; color: #000; }

.footer {
  flex: none;
  display: flex;
  justify-content: flex-end;
  gap: 16px;
  height: 74px;
  padding: 16px 4px 0 0;
  background: #6c737a;
  color: #343a40;
}
.footer a { text-decoration: underline; text-decoration-thickness: 3px; text-underline-offset: 4px; }
```
